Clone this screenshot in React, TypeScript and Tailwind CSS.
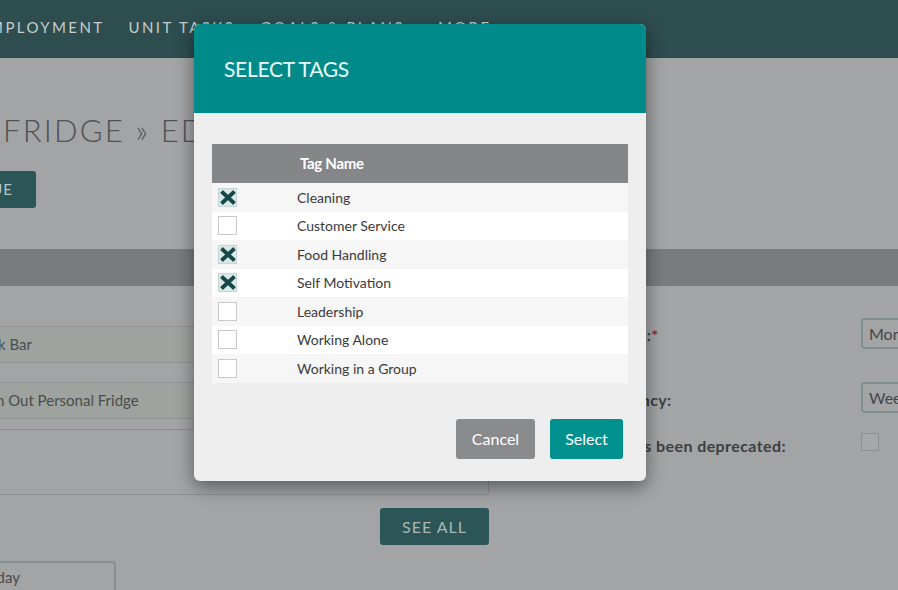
import React from "react";

const tags = [
  { name: "Cleaning", checked: true },
  { name: "Customer Service", checked: false },
  { name: "Food Handling", checked: true },
  { name: "Self Motivation", checked: true },
  { name: "Leadership", checked: false },
  { name: "Working Alone", checked: false },
  { name: "Working in a Group", checked: false },
];

function Check({ checked }: { checked: boolean }) {
  return (
    <span
      className={
        "w-[19px] h-[19px] border flex items-center justify-center " +
        (checked ? "bg-[#dbe8e8] border-[#c6d4d4]" : "bg-white border-[#c9c9c9]")
      }
    >
      {checked && (
        <svg viewBox="0 0 16 15" className="w-[16px] h-[15px]">
          <path d="M1.5 1.5L14.5 13.5M14.5 1.5L1.5 13.5" stroke="#174848" strokeWidth="3.8" />
        </svg>
      )}
    </span>
  );
}

export default function App() {
  return (
    <div className="relative w-[898px] h-[590px] overflow-hidden bg-[#a3a4a5] font-['Lato','Noto_Sans',sans-serif]">
      {/* nav */}
      <nav className="h-[58px] bg-[#2e4d4f] flex items-start pt-[18px] text-[15px] leading-[18px] tracking-[2.4px] text-[#c5cdcd] whitespace-nowrap">
        <span className="ml-[-22px]">EMPLOYMENT</span>
        <span className="ml-[24px]">UNIT TASKS</span>
        <span className="ml-[25px]">GOALS &amp; PLANS</span>
        <span className="ml-[33px]">MORE</span>
      </nav>

      <h1 className="mt-[54px] pl-[3px] text-[31px] leading-[37px] font-light tracking-[2.2px] text-[#4f5354] whitespace-nowrap">
        FRIDGE » EDIT TASK
      </h1>

      <div className="mt-[22px] flex">
        <button className="h-[37px] w-[36px] overflow-hidden flex justify-end items-center pr-[23px] bg-[#2b5556] rounded-r-[3px] text-[#b7c3c3] text-[15px] tracking-[1px] whitespace-nowrap">
          CONTINUE
        </button>
      </div>

      <div className="mt-[41px] h-[37px] bg-[#7a7b7c]" />

      <div className="flex">
        {/* left column */}
        <div className="shrink-0 ml-[-45px] w-[534px] pt-[40px] flex flex-col text-[15px] text-[#4a4d4c]">
          <div className="h-[37px] bg-[#9ea39f] border-y border-[#8e9490] px-3 flex items-center whitespace-nowrap">
            Snack Bar
          </div>
          <div className="mt-[19px] h-[37px] bg-[#9ea39f] border-y border-[#8e9490] px-3 flex items-center whitespace-nowrap">
            Clean Out Personal Fridge
          </div>
          <div className="mt-[10px] h-[66px] border border-[#8c8f8e] rounded-[3px]" />
          <button className="mt-[13px] self-end h-[37px] w-[109px] bg-[#2b5556] text-[#a9b7b6] text-[16px] tracking-[1px] rounded-[3px]">
            SEE ALL
          </button>
          <div className="mt-[16px] w-[161px] h-[37px] border-2 border-[#80908c] rounded-[4px] px-[9px] pt-[4px] leading-[20px] whitespace-nowrap">
            Monday
          </div>
        </div>

        {/* right column */}
        <div className="shrink-0 ml-[100px] pt-[32px] text-[16px] tracking-[0.4px] font-bold text-[#3d4042] whitespace-nowrap">
          <div className="flex items-center h-[31px]">
            <span className="w-[272px] pt-[3px]">
              Due On:<span className="text-[#8a2b3b]">*</span>
            </span>
            <div className="h-[31px] w-[120px] border-2 border-[#7f8f8b] rounded-[4px] px-[6px] flex items-center font-normal tracking-normal text-[#454849] text-[16px]">
              Monday
            </div>
          </div>
          <div className="mt-[33px] flex items-center h-[31px]">
            <span className="w-[272px] pt-[4px]">Frequency:</span>
            <div className="h-[31px] w-[120px] border-2 border-[#7f8f8b] rounded-[4px] px-[6px] flex items-center font-normal tracking-normal text-[#454849] text-[16px]">
              Weekly
            </div>
          </div>
          <div className="mt-[20px] flex items-start">
            <span className="w-[272px] pt-[3px] leading-[20px]">Task has been deprecated:</span>
            <span className="w-[18px] h-[18px] border border-[#8e8f90] bg-[#a6a7a8]" />
          </div>
        </div>
      </div>

      {/* modal */}
      <div className="absolute left-[194px] top-[24px] w-[452px] h-[457px] bg-[#eeeeee] rounded-[6px] shadow-[0_6px_18px_rgba(0,0,0,0.45)] overflow-hidden flex flex-col">
        <div className="h-[89px] shrink-0 bg-[#008b8a] flex items-center pl-[30px] text-[21px] text-[#e9fbfa] tracking-[-0.3px]">
          SELECT TAGS
        </div>
        <div className="px-[18px] pt-[31px]">
          <div className="h-[39px] bg-[#858688] flex items-center pl-[88px] text-[15px] font-bold text-white tracking-[-0.3px]">
            Tag Name
          </div>
          {tags.map((t, i) => (
            <div
              key={t.name}
              className={
                "h-[28.5px] flex items-center " + (i % 2 === 0 ? "bg-[#f6f6f6]" : "bg-white")
              }
            >
              <div className="w-[85px] pl-[6px] flex items-center">
                <Check checked={t.checked} />
              </div>
              <span className="text-[14px] text-[#3a3a3a]">{t.name}</span>
            </div>
          ))}
        </div>
        <div className="mt-auto flex justify-end gap-[15px] pr-[23px] pb-[22px]">
          <button className="h-[40px] w-[79px] rounded-[3px] bg-[#8a8b8d] text-white text-[16px]">
            Cancel
          </button>
          <button className="h-[40px] w-[73px] rounded-[3px] bg-[#00918f] text-white text-[16px]">
            Select
          </button>
        </div>
      </div>
    </div>
  );
}
